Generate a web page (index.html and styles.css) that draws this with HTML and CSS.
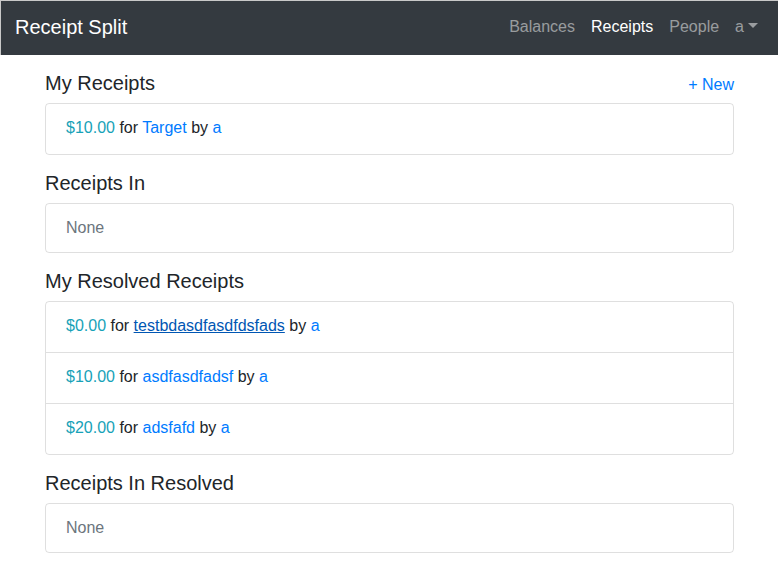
FILE: index.html
```html
<!DOCTYPE html>
<html lang="en">
<head>
<meta charset="utf-8">
<title>Receipt Split</title>
<link rel="stylesheet" href="styles.css">
</head>
<body>
<nav class="navbar">
  <a class="brand" href="#">Receipt Split</a>
  <ul class="nav">
    <li><a class="nav-link" href="#">Balances</a></li>
    <li><a class="nav-link active" href="#">Receipts</a></li>
    <li><a class="nav-link" href="#">People</a></li>
    <li><a class="nav-link dropdown" href="#">a</a></li>
  </ul>
</nav>
<main class="container">
  <section class="section">
    <div class="section-head">
      <h5 class="title">My Receipts</h5>
      <a class="link new" href="#">+ New</a>
    </div>
    <ul class="list">
      <li class="item receipt"><span class="amount">$10.00</span> for <a class="link" href="#">Target</a> by <a class="link" href="#">a</a></li>
    </ul>
  </section>
  <section class="section">
    <h5 class="title">Receipts In</h5>
    <ul class="list">
      <li class="item muted">None</li>
    </ul>
  </section>
  <section class="section">
    <h5 class="title">My Resolved Receipts</h5>
    <ul class="list">
      <li class="item receipt"><span class="amount">$0.00</span> for <a class="link focused" href="#">testbdasdfasdfdsfads</a> by <a class="link" href="#">a</a></li>
      <li class="item receipt"><span class="amount">$10.00</span> for <a class="link" href="#">asdfasdfadsf</a> by <a class="link" href="#">a</a></li>
      <li class="item receipt"><span class="amount">$20.00</span> for <a class="link" href="#">adsfafd</a> by <a class="link" href="#">a</a></li>
    </ul>
  </section>
  <section class="section">
    <h5 class="title">Receipts In Resolved</h5>
    <ul class="list">
      <li class="item muted">None</li>
    </ul>
  </section>
</main>
</body>
</html>
```
FILE: styles.css
```css
* { box-sizing: border-box; }
html, body { margin: 0; padding: 0; }
body {
  font-family: "Liberation Sans", Arial, sans-serif;
  font-size: 16px;
  line-height: 1.5;
  color: #212529;
  background: #fff;
}
.navbar {
  display: flex;
  align-items: center;
  justify-content: space-between;
  height: 55px;
  padding: 0 12px 2px 14px;
  background: #343a40;
  border-top: 1px solid #c9c9c9;
  border-left: 1px solid #c9c9c9;
}
.brand {
  color: #fff;
  font-size: 20px;
  text-decoration: none;
  line-height: 30px;
}
.nav {
  display: flex;
  list-style: none;
  margin: 0;
  padding: 0;
}
.nav-link {
  display: block;
  padding: 8px;
  color: rgba(255,255,255,.5);
  text-decoration: none;
}
.nav-link.active { color: #fff; }
.dropdown::after {
  content: "";
  display: inline-block;
  margin-left: 4px;
  vertical-align: 4px;
  border-top: 5px solid;
  border-left: 5px solid transparent;
  border-right: 5px solid transparent;
}
.container {
  max-width: 720px;
  margin: 0 auto;
  padding: 0 15px 0 16px;
}
.section-head {
  display: flex;
  justify-content: space-between;
  align-items: baseline;
  margin: 16px 0 8px;
}
.section-head .title { margin: 0; }
.new { line-height: 20px; }
.title {
  font-size: 20px;
  font-weight: 400;
  line-height: 1.2;
  margin: 16px 0 8px;
}
.list {
  list-style: none;
  margin: 0;
  padding: 0;
  border: 1px solid rgba(0,0,0,.125);
  border-radius: 4px;
}
.item {
  padding: 12px 20px;
  line-height: 24px;
}
.item.receipt { padding-bottom: 14px; }
.item + .item { border-top: 1px solid rgba(0,0,0,.125); }
.muted { color: #6c757d; }
.amount { color: #17a2b8; }
.link { color: #007bff; text-decoration: none; }
.link.focused { color: #0056b3; text-decoration: underline; }
```
